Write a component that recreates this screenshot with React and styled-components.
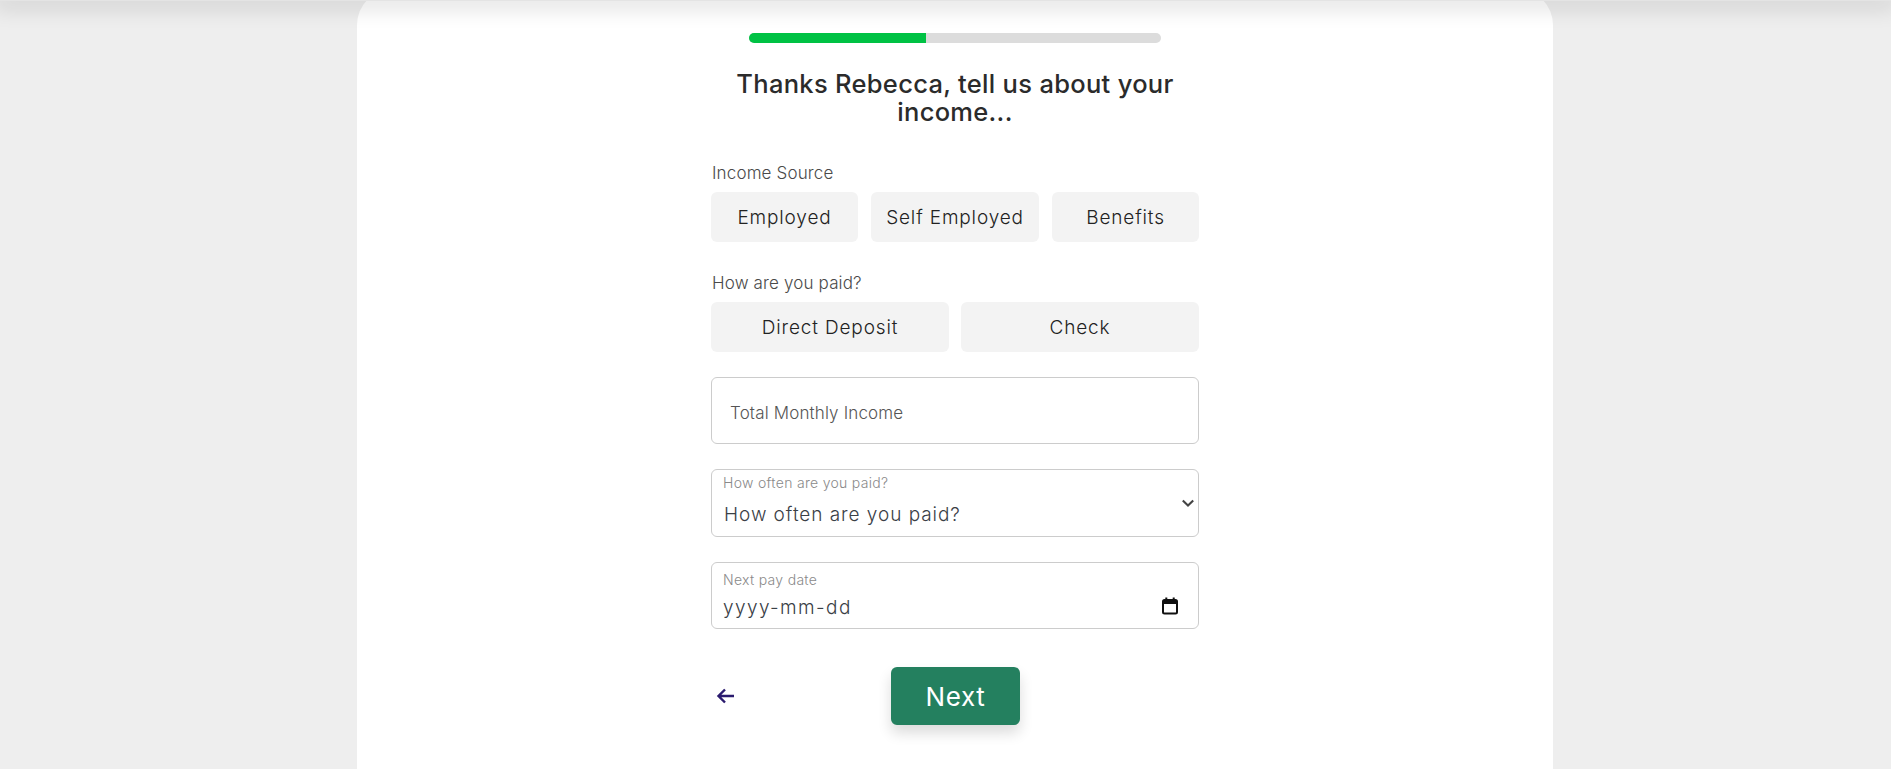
import styled, { createGlobalStyle } from "styled-components";

const GlobalStyle = createGlobalStyle`
  html, body {
    margin: 0;
    height: 100%;
    overflow: hidden;
    background: #eeeeee;
  }
  * {
    box-sizing: border-box;
  }
`;

const Page = styled.div`
  position: relative;
  height: 100vh;
  display: flex;
  justify-content: center;
  padding-left: 19px;
  font-family: Inter, "Liberation Sans", sans-serif;
  overflow: hidden;
`;

// zero height bar, only its shadow shows along the top of the page
const TopShadow = styled.div`
  position: absolute;
  top: 0;
  left: 0;
  right: 0;
  height: 1px;
  background: #e4e4e4;
  box-shadow: 0 0 22px 6px rgba(0, 0, 0, 0.16);
`;

const Card = styled.main`
  width: 1196px;
  flex-shrink: 0;
  margin-top: -11px;
  background: #fff;
  border-radius: 36px 36px 0 0;
  padding-top: 44px;
  display: flex;
  flex-direction: column;
  align-items: center;
`;

const Progress = styled.div`
  width: 412px;
  height: 10px;
  border-radius: 5px;
  background: #dcdcdc;
  overflow: hidden;
`;

const ProgressFill = styled.div`
  height: 100%;
  background: #00c244;
`;

const Heading = styled.h1`
  width: 470px;
  margin: 27px 0 0;
  font-size: 25.5px;
  line-height: 28px;
  font-weight: 500;
  letter-spacing: 0.3px;
  text-align: center;
  color: #2b2b2b;
`;

const Form = styled.form`
  width: 488px;
  margin-top: 37px;
  display: flex;
  flex-direction: column;
`;

const Label = styled.div`
  font-size: 17px;
  line-height: 20px;
  font-weight: 300;
  letter-spacing: 0.15px;
  color: #4a4a4a;
  padding-left: 1px;
  margin-bottom: 9px;
`;

const Choices = styled.div`
  display: grid;
  grid-template-columns: ${(props) => props.columns};
  gap: ${(props) => props.gap}px;
  margin-bottom: ${(props) => props.bottom}px;
`;

const Choice = styled.button`
  height: 50px;
  border: 0;
  border-radius: 6px;
  background: #f3f3f3;
  font-family: inherit;
  font-size: 19px;
  font-weight: 300;
  letter-spacing: 0.85px;
  color: #222;
  padding: 0;
`;

const TextInput = styled.input`
  display: block;
  width: 100%;
  height: 67px;
  border: 1px solid #cccccc;
  border-radius: 6px;
  padding: 4px 18px 0;
  font-family: inherit;
  font-size: 17px;
  font-weight: 300;
  letter-spacing: 0.15px;
  outline: none;
  &::placeholder {
    color: #555;
    opacity: 1;
  }
`;

const Field = styled.div`
  position: relative;
  height: ${(props) => props.height}px;
  margin-top: 25px;
  border: 1px solid #cccccc;
  border-radius: 6px;
  padding: ${(props) => props.top}px 11px 0;
  display: flex;
  flex-direction: column;
`;

const FieldLabel = styled.label`
  font-size: 14px;
  line-height: 16px;
  font-weight: 300;
  letter-spacing: 0.3px;
  color: #8a8a8a;
`;

const FieldSelect = styled.select`
  appearance: none;
  border: 0;
  background: none;
  outline: none;
  padding: 0 0 0 1px;
  margin-top: 11px;
  height: 24px;
  font-family: inherit;
  font-size: 19px;
  font-weight: 300;
  letter-spacing: 0.95px;
  color: #3a4046;
`;

const FieldDate = styled.input`
  border: 0;
  outline: none;
  padding: 0;
  margin-top: 7px;
  height: 24px;
  font-family: inherit;
  font-size: 19px;
  font-weight: 300;
  letter-spacing: 1.4px;
  &::placeholder {
    color: #3a4046;
    opacity: 1;
  }
`;

const FieldIcon = styled.svg`
  position: absolute;
  right: ${(props) => props.right}px;
  top: ${(props) => props.top}px;
`;

const Actions = styled.div`
  position: relative;
  margin-top: 38px;
  padding-left: 1px;
  display: flex;
  justify-content: center;
`;

const BackButton = styled.button`
  position: absolute;
  left: 5px;
  top: 19px;
  width: 22px;
  height: 20px;
  border: 0;
  background: none;
  padding: 0;
  display: flex;
  align-items: center;
`;

const NextButton = styled.button`
  width: 129px;
  height: 58px;
  border: 0;
  border-radius: 6px;
  background: #24805f;
  box-shadow: 0 8px 14px rgba(0, 0, 0, 0.14);
  font-family: inherit;
  font-size: 26px;
  font-weight: 400;
  letter-spacing: 0.6px;
  color: #fff;
`;

function ChevronIcon() {
  return (
    <FieldIcon right={4} top={27} width="12" height="12" viewBox="0 0 12 12" fill="none">
      <path d="M.8 3.5 6 8.5l5.2-5" stroke="#444" strokeWidth="2.1" />
    </FieldIcon>
  );
}

function CalendarIcon() {
  return (
    <FieldIcon right={19} top={34} width="18" height="18" viewBox="0 0 18 18" fill="none">
      <rect x="2" y="3" width="14" height="13.5" rx="1.5" stroke="#111" strokeWidth="2" />
      <path d="M2 5.5h14" stroke="#111" strokeWidth="3" />
      <path d="M5.3 .5v3M12.7 .5v3" stroke="#111" strokeWidth="2" />
    </FieldIcon>
  );
}

export default function App() {
  return (
    <Page>
      <GlobalStyle />
      <Card>
        <Progress>
          <ProgressFill style={{ width: "43%" }} />
        </Progress>
        <Heading>Thanks Rebecca, tell us about your income...</Heading>
        <Form>
          <Label>Income Source</Label>
          <Choices columns="147px 168px 147px" gap={13} bottom={31}>
            <Choice type="button">Employed</Choice>
            <Choice type="button">Self Employed</Choice>
            <Choice type="button">Benefits</Choice>
          </Choices>
          <Label>How are you paid?</Label>
          <Choices columns="1fr 1fr" gap={12} bottom={25}>
            <Choice type="button">Direct Deposit</Choice>
            <Choice type="button">Check</Choice>
          </Choices>
          <TextInput placeholder="Total Monthly Income" />
          <Field height={68} top={5}>
            <FieldLabel>How often are you paid?</FieldLabel>
            <FieldSelect defaultValue="">
              <option value="">How often are you paid?</option>
            </FieldSelect>
            <ChevronIcon />
          </Field>
          <Field height={67} top={9}>
            <FieldLabel>Next pay date</FieldLabel>
            <FieldDate placeholder="yyyy-mm-dd" />
            <CalendarIcon />
          </Field>
          <Actions>
            <BackButton type="button" aria-label="Back">
              <svg width="20" height="16" viewBox="0 0 20 16" fill="none">
                <path d="M9 1.5 2.5 8 9 14.5M3 8h15" stroke="#2a1a6e" strokeWidth="2.4" />
              </svg>
            </BackButton>
            <NextButton type="button">Next</NextButton>
          </Actions>
        </Form>
      </Card>
      <TopShadow />
    </Page>
  );
}
